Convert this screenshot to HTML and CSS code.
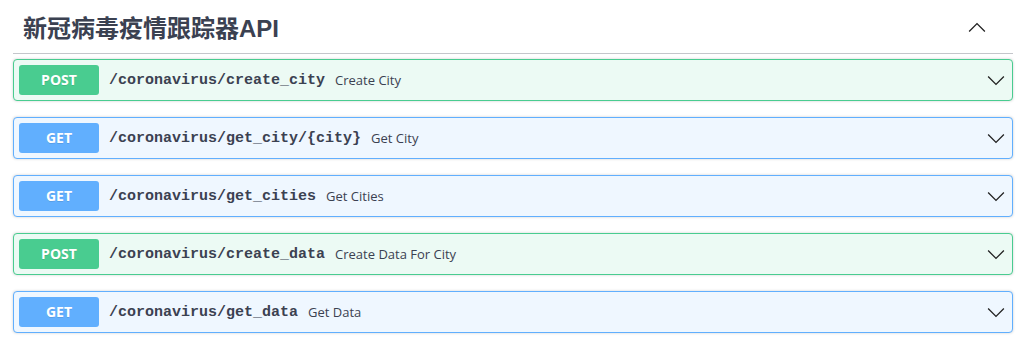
FILE: index.html
```html
<!DOCTYPE html>
<html lang="zh">
<head>
    <meta charset="UTF-8">
    <title>新冠病毒疫情跟踪器API</title>
    <link rel="stylesheet" href="styles.css">
</head>
<body>
    <div class="wrapper">
        <h4 class="tag">
            <span>新冠病毒疫情跟踪器API</span>
            <svg class="arrow" width="20" height="20" viewBox="0 0 20 20"><path d="M17.418 14.908L10 7.5l-7.418 7.408-.9-.9L10 5.7l8.318 8.308z"/></svg>
        </h4>

        <div class="opblock post">
            <span class="method">POST</span>
            <span class="path">/coronavirus/create_city</span>
            <span class="desc">Create City</span>
            <svg class="arrow" width="20" height="20" viewBox="0 0 20 20"><path d="M17.418 6.109l.9.9L10 15.3 1.682 7.009l.9-.9L10 13.5z"/></svg>
        </div>
        <div class="opblock get">
            <span class="method">GET</span>
            <span class="path">/coronavirus/get_city/{city}</span>
            <span class="desc">Get City</span>
            <svg class="arrow" width="20" height="20" viewBox="0 0 20 20"><path d="M17.418 6.109l.9.9L10 15.3 1.682 7.009l.9-.9L10 13.5z"/></svg>
        </div>
        <div class="opblock get">
            <span class="method">GET</span>
            <span class="path">/coronavirus/get_cities</span>
            <span class="desc">Get Cities</span>
            <svg class="arrow" width="20" height="20" viewBox="0 0 20 20"><path d="M17.418 6.109l.9.9L10 15.3 1.682 7.009l.9-.9L10 13.5z"/></svg>
        </div>
        <div class="opblock post">
            <span class="method">POST</span>
            <span class="path">/coronavirus/create_data</span>
            <span class="desc">Create Data For City</span>
            <svg class="arrow" width="20" height="20" viewBox="0 0 20 20"><path d="M17.418 6.109l.9.9L10 15.3 1.682 7.009l.9-.9L10 13.5z"/></svg>
        </div>
        <div class="opblock get">
            <span class="method">GET</span>
            <span class="path">/coronavirus/get_data</span>
            <span class="desc">Get Data</span>
            <svg class="arrow" width="20" height="20" viewBox="0 0 20 20"><path d="M17.418 6.109l.9.9L10 15.3 1.682 7.009l.9-.9L10 13.5z"/></svg>
        </div>
    </div>
</body>
</html>
```

FILE: styles.css
```css
body {
    margin: 0;
    background: #fff;
    font-family: "Open Sans", "Noto Sans CJK SC", sans-serif;
    color: #3b4151;
}
.wrapper {
    padding: 0 8px 0 13px;
}
.tag {
    display: flex;
    align-items: center;
    justify-content: space-between;
    margin: 0 0 5px;
    padding: 10px 26px 10px 10px;
    height: 33px;
    border-bottom: 1px solid #c4c6cb;
    font-family: "Liberation Sans", "Noto Sans CJK SC", sans-serif;
    font-size: 24px;
    font-weight: bold;
    color: #3b4151;
}
.arrow {
    fill: #222;
    flex-shrink: 0;
}
.opblock {
    display: flex;
    align-items: center;
    height: 30px;
    padding: 5px;
    margin-bottom: 16px;
    border: 1px solid;
    border-radius: 4px;
    box-shadow: 0 0 3px rgba(0, 0, 0, 0.19);
}
.opblock .arrow {
    margin-left: auto;
    margin-right: 1px;
}
.post {
    background: #ecfaf4;
    border-color: #49cc90;
}
.get {
    background: #eff7ff;
    border-color: #61affe;
}
.method {
    width: 80px;
    height: 30px;
    line-height: 30px;
    text-align: center;
    border-radius: 3px;
    color: #fff;
    font-size: 14px;
    font-weight: bold;
    text-shadow: 0 1px 0 rgba(0, 0, 0, 0.1);
}
.post .method {
    background: #49cc90;
}
.get .method {
    background: #61affe;
}
.path {
    margin-left: 10px;
    font-family: "Liberation Mono", monospace;
    font-size: 15px;
    font-weight: bold;
    color: #3b4151;
}
.desc {
    margin-left: 10px;
    font-size: 13px;
    color: #3b4151;
}
```
